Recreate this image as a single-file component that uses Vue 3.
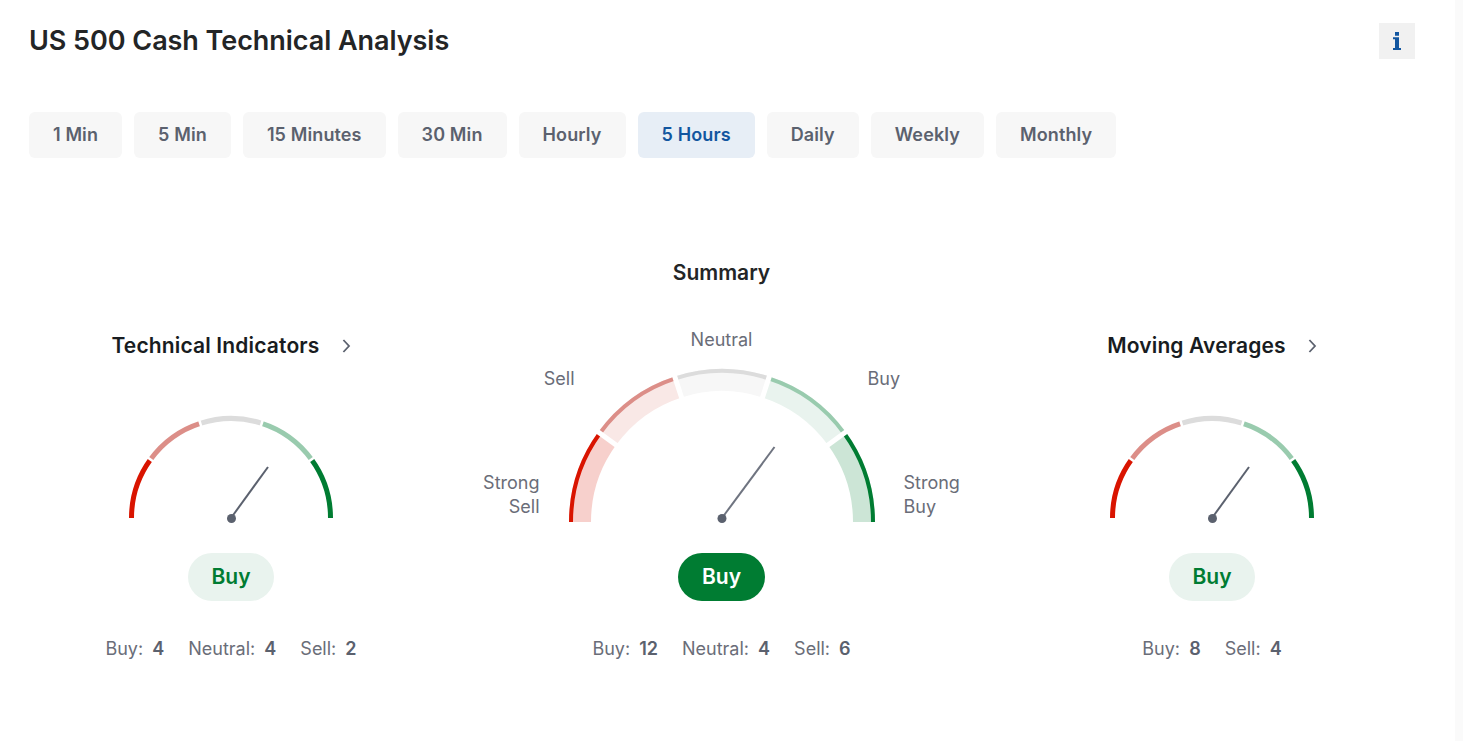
<template>
  <div class="page">
    <main class="main">
      <header class="top">
        <h1>US 500 Cash Technical Analysis</h1>
        <button class="info" type="button" aria-label="Info">
          <svg width="8" height="18" viewBox="0 0 8 18">
            <path d="M2 0h4v3.7H2zM0 5.3h6V16h2v2H0v-2h2V7.3H0z" fill="#1256a0" />
          </svg>
        </button>
      </header>

      <nav class="tabs">
        <a v-for="t in tabs" :key="t" class="tab" :class="{ active: t === '5 Hours' }">{{ t }}</a>
      </nav>

      <section class="gauges">
        <div class="col">
          <h3 class="head">
            Technical Indicators
            <svg class="chev" width="10" height="16" viewBox="0 0 10 16">
              <path d="M2.4 2l5.6 6-5.6 6" fill="none" stroke="#5b616e" stroke-width="1.8" />
            </svg>
          </h3>
          <svg class="small" width="212" height="106" viewBox="0 0 212 106">
            <path v-for="s in smallSegs" :key="s.color" :d="s.d" fill="none" :stroke="s.color" stroke-width="5" />
            <line v-for="(g, i) in smallGaps" :key="i" v-bind="g" stroke="#fff" stroke-width="2.5" />
            <line x1="106" y1="106" x2="143" y2="55" stroke="#5b616e" stroke-width="2" />
            <circle cx="106.5" cy="106.5" r="4.5" fill="#5b616e" />
          </svg>
          <div class="pill">Buy</div>
          <div class="stats">
            <span v-for="s in leftStats" :key="s[0]" class="stat">{{ s[0] }}: <b>{{ s[1] }}</b></span>
          </div>
        </div>

        <div class="col">
          <h2 class="summary">Summary</h2>
          <div class="dial">
            <span class="lbl neutral">Neutral</span>
            <span class="lbl sell">Sell</span>
            <span class="lbl buy">Buy</span>
            <span class="lbl strong-sell">Strong<br />Sell</span>
            <span class="lbl strong-buy">Strong<br />Buy</span>
            <svg class="big" width="320" height="160" viewBox="0 0 320 160">
              <path v-for="b in bigBands" :key="b.color" :d="b.d" fill="none" :stroke="b.color" stroke-width="22" />
              <path v-for="s in bigSegs" :key="s.color" :d="s.d" fill="none" :stroke="s.color" stroke-width="4" />
              <line v-for="(g, i) in bigGaps" :key="i" v-bind="g" stroke="#fff" stroke-width="5" />
              <line x1="160" y1="156" x2="212.5" y2="85" stroke="#6f7480" stroke-width="2" />
              <circle cx="160" cy="156.5" r="4.5" fill="#5b616e" />
            </svg>
          </div>
          <div class="pill solid">Buy</div>
          <div class="stats">
            <span v-for="s in midStats" :key="s[0]" class="stat">{{ s[0] }}: <b>{{ s[1] }}</b></span>
          </div>
        </div>

        <div class="col">
          <h3 class="head">
            Moving Averages
            <svg class="chev" width="10" height="16" viewBox="0 0 10 16">
              <path d="M2.4 2l5.6 6-5.6 6" fill="none" stroke="#5b616e" stroke-width="1.8" />
            </svg>
          </h3>
          <svg class="small" width="212" height="106" viewBox="0 0 212 106">
            <path v-for="s in smallSegs" :key="s.color" :d="s.d" fill="none" :stroke="s.color" stroke-width="5" />
            <line v-for="(g, i) in smallGaps" :key="i" v-bind="g" stroke="#fff" stroke-width="2.5" />
            <line x1="106" y1="106" x2="143" y2="55" stroke="#5b616e" stroke-width="2" />
            <circle cx="106.5" cy="106.5" r="4.5" fill="#5b616e" />
          </svg>
          <div class="pill">Buy</div>
          <div class="stats">
            <span v-for="s in rightStats" :key="s[0]" class="stat">{{ s[0] }}: <b>{{ s[1] }}</b></span>
          </div>
        </div>
      </section>
    </main>
    <aside class="edge"></aside>
  </div>
</template>

<script setup>
const tabs = ['1 Min', '5 Min', '15 Minutes', '30 Min', 'Hourly', '5 Hours', 'Daily', 'Weekly', 'Monthly']

const leftStats = [['Buy', 4], ['Neutral', 4], ['Sell', 2]]
const midStats = [['Buy', 12], ['Neutral', 4], ['Sell', 6]]
const rightStats = [['Buy', 8], ['Sell', 4]]

const strokeColors = ['#d91400', '#dc8e88', '#dcdcdc', '#99cbae', '#007c32']
const bandColors = ['#f7d0cc', '#f9e8e6', '#f7f7f7', '#e9f3ee', '#cce5d6']

function pt(cx, cy, r, deg) {
  const a = (deg * Math.PI) / 180
  return [cx - r * Math.cos(a), cy - r * Math.sin(a)]
}

function arc(cx, cy, r, from, to) {
  const [x0, y0] = pt(cx, cy, r, from)
  const [x1, y1] = pt(cx, cy, r, to)
  return `M${x0} ${y0}A${r} ${r} 0 0 1 ${x1} ${y1}`
}

function segments(cx, cy, r, colors) {
  return colors.map((color, i) => ({ color, d: arc(cx, cy, r, i * 36, (i + 1) * 36) }))
}

function gaps(cx, cy, r0, r1) {
  return [36, 72, 108, 144].map((deg) => {
    const [x1, y1] = pt(cx, cy, r0, deg)
    const [x2, y2] = pt(cx, cy, r1, deg)
    return { x1, y1, x2, y2 }
  })
}

const smallSegs = segments(106, 106, 99.5, strokeColors)
const smallGaps = gaps(106, 106, 94, 105)
const bigBands = segments(160, 160, 142, bandColors)
const bigSegs = segments(160, 160, 151, strokeColors)
const bigGaps = gaps(160, 160, 128, 156)
</script>

<style scoped>
.page {
  display: flex;
  min-height: 741px;
  background: #fff;
  font-family: Inter, "Liberation Sans", sans-serif;
  color: #232526;
}

.main {
  flex: 1;
  padding: 23px 0 0 29px;
}

.edge {
  width: 8px;
  background: #fafafa;
}

.top {
  display: flex;
  align-items: center;
  justify-content: space-between;
  width: 1386px;
}

.top h1 {
  margin: 0;
  font-size: 27px;
  line-height: 36px;
  font-weight: 600;
  letter-spacing: -0.05px;
}

.info {
  display: flex;
  align-items: center;
  justify-content: center;
  width: 36px;
  height: 36px;
  padding: 0;
  border: 0;
  background: #f1f1f1;
}

.tabs {
  display: flex;
  gap: 12px;
  margin-top: 53px;
}

.tab {
  padding: 0 24px;
  height: 46px;
  line-height: 46px;
  border-radius: 6px;
  background: #f7f7f7;
  color: #5b616e;
  font-size: 18px;
  font-weight: 600;
  letter-spacing: 0.12px;
}

.tab.active {
  background: #e7eef6;
  color: #1256a0;
}

.gauges {
  display: grid;
  grid-template-columns: repeat(3, 404px);
  justify-content: space-between;
  align-items: end;
  width: 1385px;
  margin-top: 102px;
}

.col {
  display: flex;
  flex-direction: column;
  align-items: center;
}

.summary {
  margin: 0;
  font-size: 21px;
  line-height: 24px;
  font-weight: 600;
  position: relative;
  top: 1px;
}

.head {
  display: flex;
  align-items: center;
  gap: 21px;
  margin: 0 0 54px;
  font-size: 21px;
  line-height: 25px;
  font-weight: 600;
  letter-spacing: 0.15px;
  color: #181c21;
}

.chev {
  flex: none;
}

.small,
.big {
  display: block;
  overflow: visible;
}

.dial {
  position: relative;
  display: flex;
  justify-content: center;
  align-items: flex-end;
  width: 404px;
  height: 192px;
  margin-top: 46px;
  margin-bottom: -4px;
}

.lbl {
  position: absolute;
  font-size: 18px;
  line-height: 24px;
  color: #6a6d78;
}

.neutral {
  top: -2px;
  left: 0;
  right: 0;
  text-align: center;
}

.sell {
  top: 37px;
  right: 349px;
}

.buy {
  top: 37px;
  left: 348px;
}

.strong-sell {
  top: 141px;
  right: 384px;
  text-align: right;
}

.strong-buy {
  top: 141px;
  left: 384px;
}

.pill {
  width: 86px;
  height: 48px;
  margin-top: 35px;
  border-radius: 24px;
  background: #e9f3ee;
  color: #007c32;
  font-size: 21px;
  font-weight: 600;
  line-height: 48px;
  text-align: center;
}

.pill.solid {
  width: 87px;
  background: #007c32;
  color: #fff;
}

.stats {
  display: flex;
  gap: 24px;
  margin-top: 36px;
  font-size: 18px;
  line-height: 24px;
  color: #6a6d78;
}

.stat b {
  margin-left: 4px;
  font-weight: 600;
  color: #5b616e;
}
</style>

<style>
html, body {
  margin: 0;
  background: #fff;
}
</style>
